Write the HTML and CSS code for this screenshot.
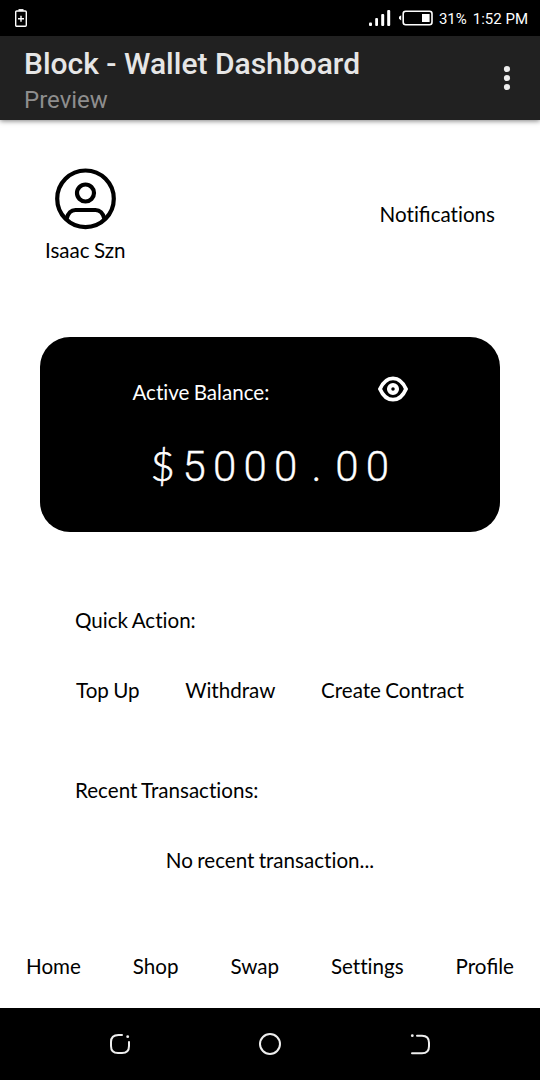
FILE: index.html
```html
<!DOCTYPE html>
<html lang="en">
<head>
    <meta charset="UTF-8">
    <meta name="viewport" content="width=device-width, initial-scale=1.0">
    <title>Block - Wallet Dashboard</title>
    <link rel="stylesheet" href="styles.css">
</head>
<body>
    <div class="status-bar">
        <svg class="saver" width="12" height="18" viewBox="0 0 12 18" fill="none" stroke="#fff">
            <rect x="0.7" y="2" width="10.6" height="15.2" rx="1" stroke-width="1.4"/>
            <path d="M3.5 1h5" stroke-width="1.8"/>
            <path d="M6 6.7v6M3 9.7h6" stroke-width="1.4"/>
        </svg>
        <svg class="signal" width="22" height="18" viewBox="0 0 22 18" fill="#fff">
            <rect x="0" y="13.5" width="3" height="3.5" rx="1"/>
            <rect x="6.2" y="9" width="2.8" height="8" rx="1"/>
            <rect x="12.2" y="5" width="3" height="12" rx="1"/>
            <rect x="18.2" y="1" width="3" height="16" rx="1"/>
        </svg>
        <svg class="battery" width="34" height="16" viewBox="0 0 34 16">
            <rect x="4.2" y="1.2" width="28.8" height="13.6" rx="2.5" fill="none" stroke="#fff" stroke-width="1.6"/>
            <path d="M2.2 5.2v5.2L0 8.8V6.8z" fill="#fff"/>
            <rect x="23" y="4" width="7.6" height="8" fill="#fff"/>
        </svg>
        <span class="percent">31%</span>
        <span class="clock">1:52 PM</span>
    </div>

    <header class="app-bar">
        <div class="app-title">
            <h1>Block - Wallet Dashboard</h1>
            <p>Preview</p>
        </div>
        <svg class="more" width="8" height="26" viewBox="0 0 8 26" fill="#eee">
            <circle cx="4" cy="4" r="3.1"/>
            <circle cx="4" cy="13" r="3.1"/>
            <circle cx="4" cy="22" r="3.1"/>
        </svg>
    </header>

    <main>
        <section class="top">
            <div class="user">
                <svg width="62" height="62" viewBox="0 0 62 62" fill="none" stroke="#000" stroke-width="4.2">
                    <circle cx="31.5" cy="30.8" r="28.3"/>
                    <circle cx="31.5" cy="25" r="8.5"/>
                    <path d="M12.5 51C14 45 16.5 42 21.5 42h20c5 0 7.5 3 9 9"/>
                </svg>
                <p>Isaac Szn</p>
            </div>
            <p class="notifications">Noti<span class="lig">fi</span>cations</p>
        </section>

        <section class="balance-card">
            <div class="balance-head">
                <p>Active Balance:</p>
                <svg width="30" height="26" viewBox="0 0 30 26" fill="none" stroke="#fff">
                    <path d="M2 13C5 6 9.5 2.3 15 2.3S25 6 28 13C25 20 20.5 23.7 15 23.7S5 20 2 13z" stroke-width="3.8"/>
                    <circle cx="15" cy="13" r="3.9" stroke-width="4.3"/>
                </svg>
            </div>
            <p class="amount"><span class="dollar">$</span>5000<span class="point">.</span>00</p>
        </section>

        <section class="quick">
            <p>Quick Action:</p>
            <div class="actions">
                <span>Top Up</span>
                <span>Withdraw</span>
                <span>Create Contract</span>
            </div>
        </section>

        <section class="recent">
            <p>Recent Transactions:</p>
            <p class="empty">No recent transaction...</p>
        </section>

        <nav class="menu">
            <span>Home</span>
            <span>Shop</span>
            <span>Swap</span>
            <span>Settings</span>
            <span>Pro<span class="lig">fi</span>le</span>
        </nav>
    </main>

    <footer class="system-nav">
        <svg width="24" height="24" viewBox="0 0 24 24" fill="none" stroke="#eee" stroke-width="2" stroke-linecap="round">
            <path d="M14 3H10.5Q3 3 3 10v4q0 7 7 7h4q7 0 7-7v-4"/>
            <circle cx="19.7" cy="4.7" r="1.4" fill="#eee" stroke="none"/>
        </svg>
        <svg width="24" height="24" viewBox="0 0 24 24" fill="none" stroke="#eee" stroke-width="2">
            <circle cx="12" cy="12" r="10"/>
        </svg>
        <svg width="24" height="24" viewBox="0 0 24 24" fill="none" stroke="#eee" stroke-width="2" stroke-linecap="round">
            <path d="M9 3.7h5q7 0 7 7v3.5q0 7-7 7H4"/>
            <circle cx="4.3" cy="3.7" r="1.4" fill="#eee" stroke="none"/>
        </svg>
    </footer>
</body>
</html>
```
FILE: styles.css
```css
* {
    box-sizing: border-box;
}
body {
    margin: 0;
    height: 1080px;
    display: flex;
    flex-direction: column;
    overflow: hidden;
    background-color: #fff;
    color: #000;
    font-family: Lato, sans-serif;
    font-size: 20.6px;
    line-height: 26px;
    word-spacing: -1px;
    font-variant-ligatures: none;
}
h1, p {
    margin: 0;
}
svg {
    display: block;
    flex-shrink: 0;
}
.lig {
    font-variant-ligatures: common-ligatures;
}
.status-bar {
    height: 36px;
    padding: 0 12px 0 15px;
    display: flex;
    align-items: center;
    background-color: #000;
    color: #fff;
    font-family: Roboto, sans-serif;
    font-size: 15px;
    word-spacing: 0;
    white-space: nowrap;
}
.signal {
    margin-left: auto;
    margin-right: 8px;
}
.battery {
    margin-right: 6px;
}
.percent, .clock {
    padding-top: 2px;
}
.clock {
    margin-left: 6px;
}
.app-bar {
    height: 84px;
    padding: 0 29px 0 24px;
    display: flex;
    align-items: center;
    justify-content: space-between;
    background-color: #212121;
    box-shadow: 0 1px 5px rgba(0, 0, 0, 0.5);
    font-family: Roboto, sans-serif;
    word-spacing: 0;
}
.app-title {
    padding-top: 8px;
}
.app-title h1 {
    color: #e6e6e6;
    font-size: 30px;
    font-weight: 500;
    line-height: 36px;
}
.app-title p {
    color: #8e8e8e;
    font-size: 24px;
    line-height: 36px;
}
main {
    flex: 1;
    display: flex;
    flex-direction: column;
}
.top {
    height: 217px;
    padding: 48px 45px 0;
    display: flex;
    justify-content: space-between;
}
.user {
    display: flex;
    flex-direction: column;
    align-items: center;
}
.user p {
    margin-top: 7px;
}
.notifications {
    margin-top: 33px;
}
.balance-card {
    height: 195px;
    margin: 0 40.4px;
    padding-top: 39px;
    border-radius: 30px;
    background-color: #000;
    color: #fff;
}
.balance-head {
    padding: 0 91.6px 0 92px;
    display: flex;
    justify-content: space-between;
}
.balance-head p {
    margin-top: 3px;
}
.amount {
    display: flex;
    align-items: baseline;
    margin: 35px 0 0 110px;
    font-family: Roboto, sans-serif;
    font-size: 42px;
    font-weight: 300;
    line-height: 50px;
    letter-spacing: 7.2px;
    -webkit-text-stroke: 0.3px #fff;
}
.dollar {
    width: 32px;
    font-family: Lato, sans-serif;
    -webkit-text-stroke: 0.6px #fff;
}
.point {
    width: 30.8px;
    padding-left: 7px;
}
.quick {
    padding: 75px 76px 0;
}
.quick p, .recent p {
    margin-left: -1px;
}
.actions {
    display: flex;
    justify-content: space-between;
    margin-top: 44px;
}
.recent {
    padding: 74px 76px 0;
}
.recent .empty {
    margin: 44px 0 0;
    text-align: center;
}
.menu {
    display: flex;
    justify-content: space-between;
    margin-top: 80px;
    padding: 0 26px;
}
.system-nav {
    height: 72px;
    padding: 0 108px;
    display: flex;
    align-items: center;
    justify-content: space-between;
    background-color: #000;
}
```
